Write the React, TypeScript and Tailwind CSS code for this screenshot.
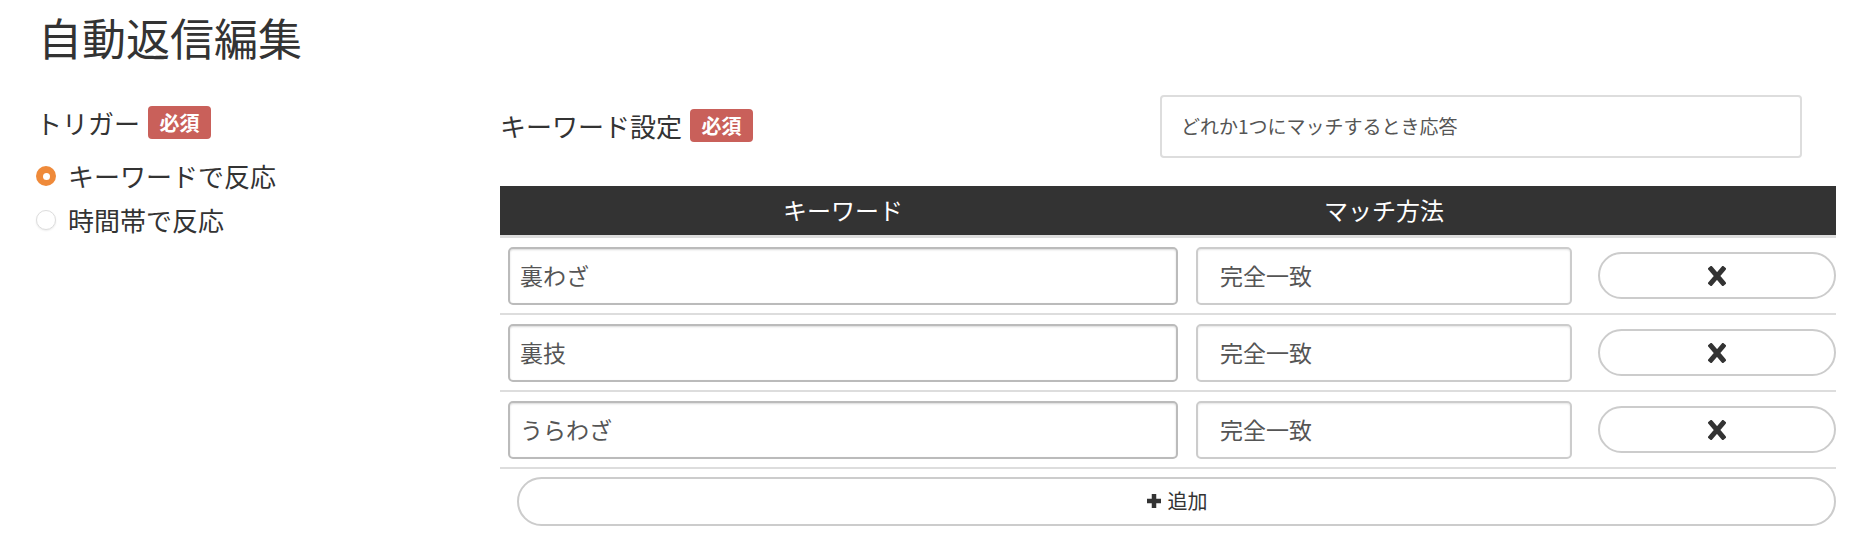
import React from 'react';

const font = { fontFamily: '"Noto Sans CJK JP", "Noto Sans", sans-serif' };

const Badge = () => (
  <span className="ml-[8px] inline-flex h-[33px] w-[63px] items-center justify-center rounded-[4px] bg-[#c9605a] text-[20px] font-bold leading-none text-white">
    必須
  </span>
);

const Radio = ({ checked, label }: { checked?: boolean; label: string }) => (
  <label className="flex items-center gap-[12px] text-[26px] leading-none text-[#333]">
    {checked ? (
      <span className="flex h-[20px] w-[20px] items-center justify-center rounded-full bg-[#ef8a3a]">
        <span className="h-[7px] w-[7px] rounded-full bg-white" />
      </span>
    ) : (
      <span className="h-[20px] w-[20px] rounded-full border border-[#ddd] bg-white shadow-[0_1px_2px_rgba(0,0,0,0.08)]" />
    )}
    {label}
  </label>
);

const XIcon = () => (
  <svg width="18" height="20" viewBox="0 0 18 20">
    <path d="M3 3 L15 17 M15 3 L3 17" stroke="#333" strokeWidth="5" strokeLinecap="square" />
  </svg>
);

const PlusIcon = () => (
  <svg width="16" height="16" viewBox="0 0 16 16">
    <path d="M8 1 V15 M1 8 H15" stroke="#333" strokeWidth="4.5" />
  </svg>
);

const rows = ['裏わざ', '裏技', 'うらわざ'];

export default function App() {
  return (
    <div className="h-[552px] w-[1876px] overflow-hidden bg-white pl-[40px] pr-[40px]" style={font}>
      {/* タイトル */}
      <h1 className="-ml-[2px] pt-[10px] text-[44px] font-normal leading-[54px] text-[#333]">自動返信編集</h1>

      <div className="mt-[42px] flex">
        {/* 左：トリガー */}
        <div className="-ml-[4px] w-[464px] shrink-0">
          <div className="flex items-center text-[26px] leading-none text-[#333]">
            トリガー
            <Badge />
          </div>
          <div className="mt-[24px] flex flex-col gap-[18px]">
            <Radio checked label="キーワードで反応" />
            <Radio label="時間帯で反応" />
          </div>
        </div>

        {/* 右：キーワード設定 */}
        <div className="flex-1">
          <div className="-mt-[11px] flex items-center justify-between pr-[34px]">
            <div className="-mt-[2px] flex items-center text-[26px] leading-none text-[#333]">
              キーワード設定
              <Badge />
            </div>
            <div className="flex h-[63px] w-[642px] items-center rounded-[4px] border-2 border-[#ddd] px-[19px] text-[19px] text-[#555]">
              どれか1つにマッチするとき応答
            </div>
          </div>

          <table className="mt-[28px] w-full border-collapse">
            <thead>
              <tr className="h-[50px] border-b-[3px] border-[#ddd] bg-[#333] text-[24px] text-white">
                <th className="w-[686px] font-normal">キーワード</th>
                <th className="w-[396px] font-normal">マッチ方法</th>
                <th />
              </tr>
            </thead>
            <tbody>
              {rows.map((kw) => (
                <tr key={kw} className="border-b-[2px] border-[#ddd]">
                  <td className="pb-[8px] pl-[8px] pr-[8px] pt-[9px]">
                    <div className="flex h-[58px] items-center rounded-[5px] border-2 border-[#bbb] px-[10px] text-[23px] text-[#555] shadow-[inset_0_1px_2px_rgba(0,0,0,0.15)]">
                      {kw}
                    </div>
                  </td>
                  <td className="pb-[8px] pl-[10px] pr-[10px] pt-[9px]">
                    <div className="flex h-[58px] items-center rounded-[5px] border-2 border-[#ccc] px-[22px] text-[23px] text-[#555] shadow-[inset_0_1px_2px_rgba(0,0,0,0.1)]">
                      完全一致
                    </div>
                  </td>
                  <td className="pb-[8px] pl-[16px] pt-[9px]">
                    <button className="flex h-[47px] w-full items-center justify-center rounded-full border-2 border-[#ccc] bg-white">
                      <XIcon />
                    </button>
                  </td>
                </tr>
              ))}
            </tbody>
          </table>

          <div className="pl-[17px] pt-[8px]">
            <button className="flex h-[49px] w-full items-center justify-center gap-[6px] rounded-full border-2 border-[#ccc] bg-white text-[20px] text-[#333]">
              <PlusIcon />
              追加
            </button>
          </div>
        </div>
      </div>
    </div>
  );
}
